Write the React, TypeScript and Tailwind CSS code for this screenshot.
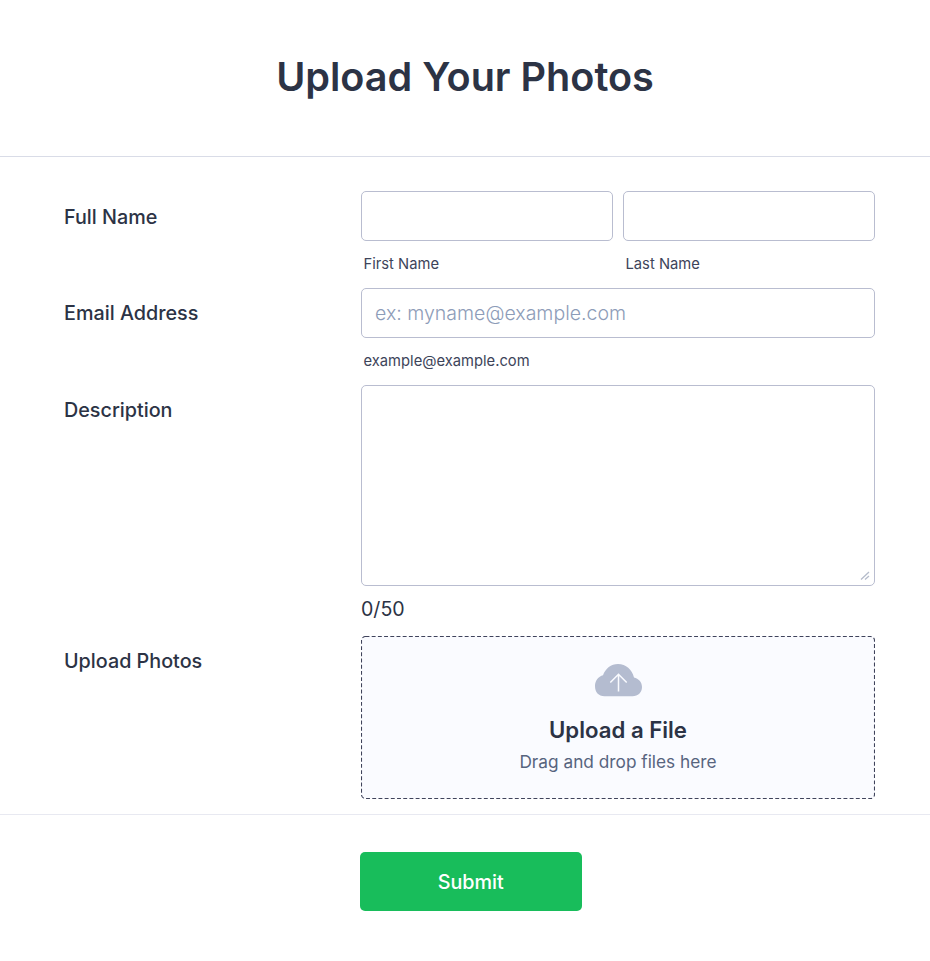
import React from "react";

function Label({ children, raised = false }: { children: React.ReactNode; raised?: boolean }) {
  return (
    <div className={`w-[297px] shrink-0 text-[19.75px] leading-[28px] font-medium ${raised ? "pt-[11px]" : "pt-[12px]"}`}>
      {children}
    </div>
  );
}

function Hint({ children }: { children: React.ReactNode }) {
  return <div className="mt-[12px] pl-[2.5px] text-[14.75px] leading-[22px] text-[#3d445a]">{children}</div>;
}

const box = "block w-full rounded-[5px] border border-[#b9bdd0] bg-white outline-none";

export default function App() {
  return (
    <div className="h-[961px] w-full overflow-hidden bg-white font-['Inter',sans-serif] text-[#2c3345]">
      <header className="h-[157px] border-b border-[#d9dce7] pt-[53px] text-center">
        <h1 className="text-[39.6px] leading-[48px] font-semibold">Upload Your Photos</h1>
      </header>
      <form className="h-[658px] border-b border-[#e8e9f1] pt-[34px] pr-[55px] pl-[64px]">
        <div className="flex h-[97px]">
          <Label>Full Name</Label>
          <div className="flex flex-1 gap-[10px]">
            {["First Name", "Last Name"].map((n) => (
              <div key={n} className="flex-1">
                <input aria-label={n} className={`${box} h-[50px]`} />
                <Hint>{n}</Hint>
              </div>
            ))}
          </div>
        </div>
        <div className="flex h-[97px]">
          <Label raised>Email Address</Label>
          <div className="flex-1">
            <input
              placeholder="ex: myname@example.com"
              className={`${box} h-[50px] px-[13px] text-[19.55px] font-light placeholder:text-[#8d9cb8]`}
            />
            <Hint>example@example.com</Hint>
          </div>
        </div>
        <div className="flex h-[251px]">
          <Label raised>Description</Label>
          <div className="flex-1">
            <div className="relative">
              <textarea className={`${box} h-[201px] resize-none`} />
              <svg className="pointer-events-none absolute right-[5px] bottom-[5px]" width="10" height="10" viewBox="0 0 10 10" stroke="#b5bccb" strokeWidth="1.3">
                <path d="M1 8.500L9 1M5 8.500L9 5" />
              </svg>
            </div>
            <div className="mt-[9px] text-[19.6px] leading-[28px]">0/50</div>
          </div>
        </div>
        <div className="flex">
          <Label raised>Upload Photos</Label>
          <div className="relative flex h-[163px] flex-1 flex-col items-center rounded-[4px] bg-[#fafbff] pt-[28px]">
            <svg className="pointer-events-none absolute inset-0" width="514" height="163" fill="none">
              <rect x="0.5" y="0.5" width="513" height="162" rx="4" stroke="#3f435b" strokeWidth="1.1" strokeDasharray="3.900 2.300" />
            </svg>
            <svg width="48" height="33" viewBox="0 0 48 33" fill="none">
              <path d="M10.500 32.300C4.500 32.300 1 28 1 22C1 16.500 4.500 12.500 9 11.300C11.500 4.500 17 0 24 0C32 0 38 5.500 40 13.500C44.500 14.500 48 18 48 23C48 28.500 44 32.300 38.500 32.300Z" fill="#b4bcd0" />
              <path d="M24.500 27.500V10.500M16.300 18.500L24.500 10.300L32.700 18.500" stroke="#fafbff" strokeWidth="1.5" />
            </svg>
            <div className="mt-[17px] text-[22.2px] leading-[32px] font-semibold">Upload a File</div>
            <div className="text-[17.25px] leading-[32px] text-[#57647e]">Drag and drop files here</div>
          </div>
        </div>
      </form>
      <footer className="pt-[37px] pl-[359.5px]">
        <button className="block h-[59px] w-[222.5px] rounded-[5px] bg-[#18bd5b] pt-[3px] text-[19.75px] font-medium text-white">Submit</button>
      </footer>
    </div>
  );
}
